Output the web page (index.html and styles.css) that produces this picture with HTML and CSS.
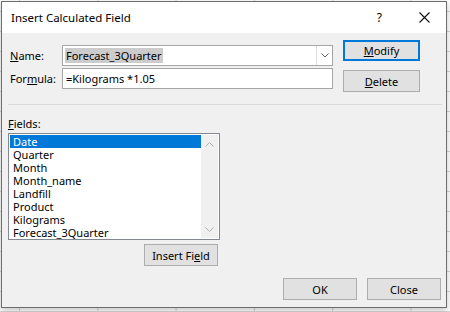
FILE: index.html
```html
<!DOCTYPE html>
<html lang="en">
<head>
<meta charset="UTF-8">
<meta name="viewport" content="width=device-width, initial-scale=1.0">
<title>Insert Calculated Field</title>
<link rel="stylesheet" href="styles.css">
</head>
<body>
<div class="dialog">
    <div class="titlebar">
        <span class="title">Insert Calculated Field</span>
        <span class="help">?</span>
        <svg class="close-x" width="11" height="11" viewBox="0 0 11 11">
            <path d="M0.5 0.5 L10.5 10.5 M10.5 0.5 L0.5 10.5" stroke="#111" stroke-width="1.1" fill="none"/>
        </svg>
    </div>

    <div class="form-top">
        <div class="form-grid">
            <label class="label"><u>N</u>ame:</label>
            <div class="combo">
                <span class="combo-text"><span class="sel">Forecast_3Quarter</span></span>
                <span class="combo-arrow">
                    <svg width="8" height="5" viewBox="0 0 8 5"><path d="M0.5 0.5 L4 4 L7.5 0.5" stroke="#606060" fill="none"/></svg>
                </span>
            </div>
            <label class="label">For<u>m</u>ula:</label>
            <div class="textbox">=Kilograms *1.05</div>
        </div>
        <div class="side-buttons">
            <button class="btn btn-default"><u>M</u>odify</button>
            <button class="btn btn-tall"><u>D</u>elete</button>
        </div>
    </div>

    <hr class="separator">

    <div class="fields-label"><u>F</u>ields:</div>
    <div class="listbox">
        <ul class="list-items">
            <li class="selected">Date</li>
            <li>Quarter</li>
            <li>Month</li>
            <li>Month_name</li>
            <li>Landfill</li>
            <li>Product</li>
            <li>Kilograms</li>
            <li>Forecast_3Quarter</li>
        </ul>
        <div class="scrollbar">
            <svg width="9" height="5" viewBox="0 0 9 5"><path d="M0.5 4.5 L4.5 0.5 L8.5 4.5" stroke="#b0b0b0" fill="none"/></svg>
            <svg width="9" height="5" viewBox="0 0 9 5"><path d="M0.5 0.5 L4.5 4.5 L8.5 0.5" stroke="#b0b0b0" fill="none"/></svg>
        </div>
    </div>
    <div class="insert-row">
        <button class="btn btn-insert">Insert Fi<u>e</u>ld</button>
    </div>

    <div class="footer">
        <button class="btn btn-footer">OK</button>
        <button class="btn btn-footer">Close</button>
    </div>
</div>
</body>
</html>
```

FILE: styles.css
```css
body {
    margin: 0;
    padding: 0;
    width: 450px;
    height: 312px;
    overflow: hidden;
    font-family: 'Segoe UI', 'Noto Sans', 'Open Sans', sans-serif;
    font-size: 11px;
    color: #000;
    background-color: #ffffff;
    /* spreadsheet grid behind the dialog */
    background-image:
        linear-gradient(to right, #d4d4d4 1px, transparent 1px),
        linear-gradient(to bottom, #d4d4d4 1px, transparent 1px);
    background-size: 78.3px 100%, 100% 20px;
    background-position: 19px 0, 0 -9px;
}
.dialog {
    box-sizing: border-box;
    width: 446px;
    height: 307px;
    margin: 1px 0 0 1px;
    border: 1px solid #6e6e6e;
    background: #f0f0f0;
    box-shadow: 0 2px 6px rgba(0, 0, 0, 0.25);
    display: flex;
    flex-direction: column;
}
.titlebar {
    height: 31px;
    background: #fff;
    display: flex;
    align-items: center;
    padding-left: 9px;
    flex-shrink: 0;
    font-size: 11.5px;
}
.title {
    flex: 1;
}
.help {
    font-size: 12px;
    margin-right: 37px;
}
.close-x {
    margin-right: 16px;
}
.form-top {
    display: flex;
    padding: 7px 0 0 8px;
    gap: 10px;
}
.form-grid {
    display: grid;
    grid-template-columns: 52px 271px;
    grid-auto-rows: 21px;
    row-gap: 2px;
    align-items: center;
    margin-top: 5px;
}
.label {
    line-height: 16px;
}
.combo, .textbox {
    box-sizing: border-box;
    height: 21px;
    background: #fff;
    border: 1px solid #a6a6a6;
}
.combo {
    display: flex;
    align-items: stretch;
}
.combo-text {
    flex: 1;
    padding-left: 2px;
    display: flex;
    align-items: center;
}
.sel {
    background: #cccccc;
    padding: 0 1px;
    line-height: 15px;
}
.combo-arrow {
    width: 15px;
    border-left: 1px solid #dcdcdc;
    display: flex;
    align-items: center;
    justify-content: center;
}
.textbox {
    padding-left: 3px;
    line-height: 19px;
}
.side-buttons {
    display: flex;
    flex-direction: column;
    gap: 9px;
}
.btn {
    box-sizing: border-box;
    font-family: inherit;
    font-size: 11px;
    color: #000;
    background: #e1e1e1;
    border: 1px solid #adadad;
    padding: 0;
    margin: 0;
}
.side-buttons .btn {
    width: 77px;
    height: 21px;
}
.btn-default {
    border: 2px solid #0078d7;
}
.side-buttons .btn-tall {
    height: 22px;
}
.separator {
    border: none;
    border-top: 1px solid #dadada;
    margin: 12px 4px 0 6px;
    height: 0;
}
.fields-label {
    margin: 11px 0 0 6px;
    line-height: 16px;
}
.listbox {
    box-sizing: border-box;
    width: 212px;
    height: 107px;
    margin: 1px 0 0 6px;
    border: 1px solid #828790;
    background: #fff;
    display: flex;
    padding: 1px;
}
.list-items {
    list-style: none;
    margin: 0;
    padding: 0;
    width: 191px;
}
.list-items li {
    height: 13px;
    line-height: 13px;
    padding-left: 3px;
}
.list-items li.selected {
    background: #0078d7;
    color: #fff;
}
.scrollbar {
    width: 17px;
    background: #f0f0f0;
    display: flex;
    flex-direction: column;
    justify-content: space-between;
    align-items: center;
    padding: 7px 0 6px;
    box-sizing: border-box;
}
.insert-row {
    width: 212px;
    margin: 4px 0 0 6px;
    display: flex;
    justify-content: flex-end;
}
.btn-insert {
    width: 74px;
    height: 22px;
    margin-right: 2px;
}
.footer {
    display: flex;
    justify-content: flex-end;
    gap: 10px;
    padding-right: 5px;
    margin-top: 12px;
}
.btn-footer {
    width: 74px;
    height: 22px;
}
```
